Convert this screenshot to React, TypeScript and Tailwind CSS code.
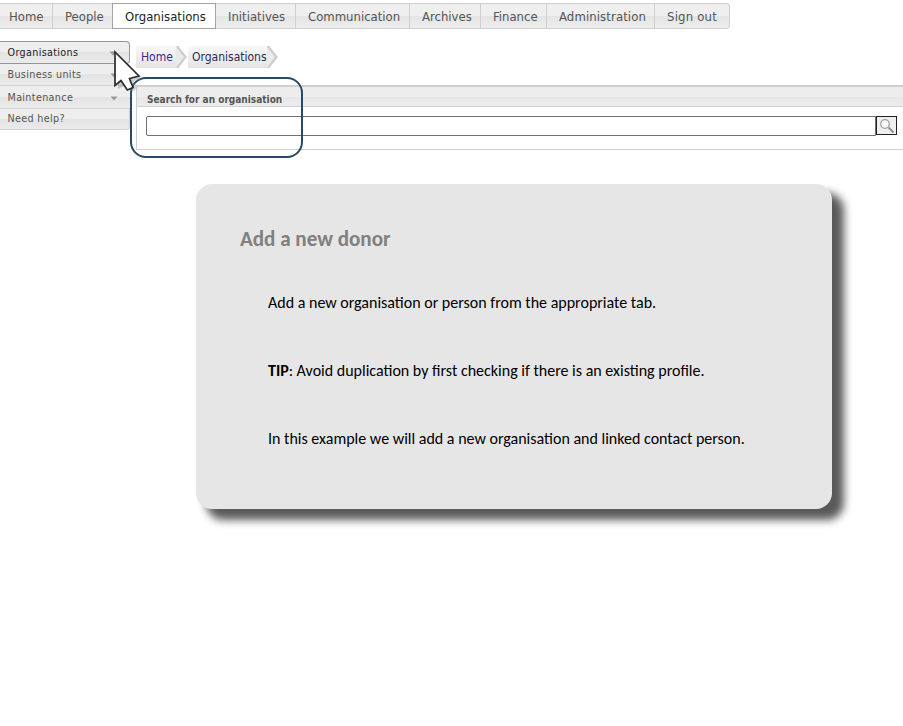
import React from 'react';

const nav = [
  { label: 'Home', box: 'w-[53px] pl-[9px]' },
  { label: 'People', box: 'w-[60px] pl-[12px]' },
  { label: 'Organisations', box: 'w-[103px] pl-[12px]', active: true },
  { label: 'Initiatives', box: 'w-[80px] pl-[12px]' },
  { label: 'Communication', box: 'w-[114px] pl-[12px]' },
  { label: 'Archives', box: 'w-[71px] pl-[12px]' },
  { label: 'Finance', box: 'w-[66px] pl-[12px]' },
  { label: 'Administration', box: 'w-[108px] pl-[12px] tracking-[0.100px]' },
  { label: 'Sign out', box: 'w-[75px] pl-[12px] rounded-r-[4px] tracking-[0.200px]' },
];

const side = [
  { label: 'Organisations', box: 'h-[23px] border-y border-r border-[#969696] rounded-r-[4px] pt-[2px] text-[#222]', arrow: true },
  { label: 'Business units', box: 'h-[22px] border-b border-[#d2d2d2] pt-[2px] text-[#555]', arrow: true },
  { label: 'Maintenance', box: 'h-[23px] border-b border-[#d2d2d2] pt-[2px] text-[#555]', arrow: true },
  { label: 'Need help?', box: 'h-[21px] border-b border-r border-[#d2d2d2] rounded-br-[4px] pt-[1px] text-[#555]', arrow: false },
];

function Chevron() {
  return (
    <svg className="block h-[22px] w-[12px] shrink-0" viewBox="0 0 12 22" fill="none">
      <path d="M0 0h1l8 11-8 11H0z" fill="#eaeaea" />
      <path d="M1 0l8.500 11L1 22" stroke="#cdcdcd" strokeWidth="2.200" />
    </svg>
  );
}

function Cursor() {
  return (
    <svg className="absolute left-[108px] top-[46px] h-[52px] w-[40px]" viewBox="0 0 40 52">
      <path d="M10 8l24 26-8 1 3 7-5 4-8-6-6 3z" fill="#777" opacity=".35" />
      <path
        d="M7 6V39.500L13 34.500L19.300 44L25 41.500L21.500 32.500L31 30Z"
        fill="#fff"
        stroke="#2b2b2b"
        strokeWidth="1.700"
      />
    </svg>
  );
}

export default function App() {
  return (
    <div className="relative h-[726px] w-[903px] overflow-hidden bg-white pt-[3px] font-['DejaVu_Sans_Condensed','DejaVu_Sans',sans-serif]">
      <nav className="flex h-[26px] w-[730px] text-[13px] leading-[25px]">
        {nav.map((n) => (
          <div
            key={n.label}
            className={
              'h-[26px] shrink-0 whitespace-nowrap border-y border-r ' +
              n.box +
              (n.active
                ? ' border-[#a5a5a5] bg-white text-[#222] shadow-[-1px_0_0_#a5a5a5]'
                : ' border-[#cfcfcf] bg-[linear-gradient(#efefef_0_50%,#e4e4e4_50%,#ededed)] text-[#555]')
            }
          >
            <span>{n.label}</span>
          </div>
        ))}
      </nav>

      <div className="mt-[12px] flex">
        <aside className="h-[90px] w-[130px] shrink-0 font-['DejaVu_Sans',sans-serif] text-[9.600px] tracking-[0.350px]">
          {side.map((s) => (
            <div
              key={s.label}
              className={
                'flex items-center justify-between bg-[linear-gradient(#eeeeee_0_50%,#e3e3e3_50%,#ebebeb)] pl-[7.500px] pr-[12px] ' + s.box
              }
            >
              <span>{s.label}</span>
              {s.arrow && (
                <svg className="h-[5px] w-[8px]" viewBox="0 0 8 5">
                  <path d="M.500.500h7L4 4.500z" fill="#999" />
                </svg>
              )}
            </div>
          ))}
        </aside>

        <main className="ml-[6px] w-[767px] shrink-0">
          <div className="mt-[5px] flex h-[22px] text-[12px] leading-[22px]">
            <div className="w-[40px] bg-[linear-gradient(#f8f8f8,#e4e4e4)] pl-[5px] text-[#45258c]">
              <span>Home</span>
            </div>
            <Chevron />
            <div className="w-[79px] whitespace-nowrap bg-[linear-gradient(#f8f8f8,#e4e4e4)] pl-[4px] text-[#2b2b55]">
              <span>Organisations</span>
            </div>
            <Chevron />
          </div>

          <section className="mt-[17px] h-[65px] border-b border-l border-t-2 border-[#cfcfcf]">
            <h2 className="h-[20px] border-b border-[#d2d2d2] bg-[linear-gradient(#ededed_0_50%,#e7e7e7_50%,#ececec)] pl-[10px] text-[10px] font-bold leading-[25px] text-[#555]">
              <span>Search for an organisation</span>
            </h2>
            <div className="mt-[9px] flex h-[20px] pl-[9px]">
              <input
                className="block h-[20px] w-[730px] rounded-l-[2px] border border-[#707070] bg-white outline-none"
                aria-label="Search for an organisation"
              />
              <button
                className="flex h-[19px] w-[21px] items-center justify-center border border-[#222] bg-[#efefef]"
                aria-label="Search"
              >
                <svg className="h-[16px] w-[16px]" viewBox="0 0 16 16" fill="none">
                  <circle cx="6" cy="6" r="4.300" stroke="#a0a0a0" strokeWidth="1.300" fill="#f8f8f8" />
                  <path d="M9.500 9.500l5 5" stroke="#929292" strokeWidth="2" />
                </svg>
              </button>
            </div>
          </section>
        </main>
      </div>

      <article className="ml-[196px] mt-[34px] h-[325px] w-[636px] rounded-[16px] bg-[#e6e6e6] pl-[44px] pt-[40px] font-['Carlito',sans-serif] text-black shadow-[11px_10px_8px_1px_#5a5a5a]">
        <h1 className="h-[30px] text-[21.100px] font-bold leading-[30px] text-[#808080]">
          <span>Add a new donor</span>
        </h1>
        <div className="ml-[28px] mt-[38px] flex flex-col gap-[46px] whitespace-nowrap text-[16px] leading-[22px]">
          <p><span>Add a new organisation or person from the appropriate tab.</span></p>
          <p><span><b>TIP</b>: Avoid duplication by first checking if there is an existing profile.</span></p>
          <p><span>In this example we will add a new organisation and linked contact person.</span></p>
        </div>
      </article>

      <div className="absolute left-[130px] top-[77px] h-[81px] w-[173px] rounded-[16px] border-2 border-[#294a66]" />
      <Cursor />
    </div>
  );
}
